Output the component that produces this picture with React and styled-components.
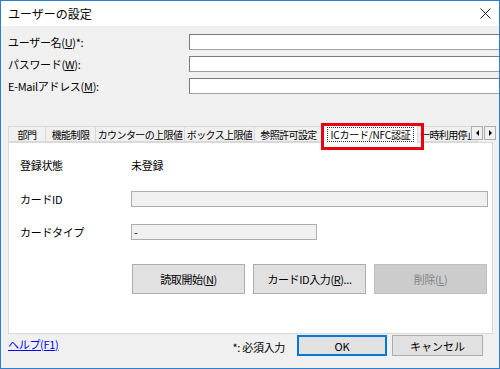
import React from 'react';
import styled, { createGlobalStyle } from 'styled-components';

const GlobalStyle = createGlobalStyle`
  html, body {
    margin: 0;
    padding: 0;
    background: #ffffff;
  }
  * {
    box-sizing: border-box;
  }
`;

const Window = styled.div`
  width: 500px;
  height: 369px;
  border: 1px solid #2b7fd4;
  background: #f0f0f0;
  display: flex;
  flex-direction: column;
  overflow: hidden;
  font-family: 'Noto Sans CJK JP', 'Noto Sans', sans-serif;
  font-size: 11px;
  color: #000;
  position: relative;
`;

const TitleBar = styled.div`
  height: 25px;
  background: #ffffff;
  display: flex;
  align-items: center;
  justify-content: space-between;
  padding: 0 6px 0 7px;
  font-size: 12px;
`;

const CloseButton = styled.div`
  width: 14px;
  height: 14px;
  display: flex;
  align-items: center;
  justify-content: center;
  margin-right: 1px;
`;

const Form = styled.div`
  display: flex;
  flex-direction: column;
  gap: 6px;
  padding: 8px 0 0 7px;
`;

const FieldRow = styled.div`
  display: grid;
  grid-template-columns: 181px 1fr;
  align-items: center;
  height: 16px;
`;

const Label = styled.span`
  white-space: nowrap;
  line-height: 16px;
  letter-spacing: -0.3px;
`;

const Key = styled.span`
  text-decoration: underline;
`;

const TextInput = styled.div`
  height: 16px;
  margin-right: ${p => (p.fit ? '0' : '-2px')};
  background: ${p => (p.disabled ? '#f0f0f0' : '#ffffff')};
  border: 1px solid ${p => (p.disabled ? '#adadad' : '#7a7a7a')};
  border-right-color: ${p => (p.disabled ? '#adadad' : '#a0a0a0')};
  border-bottom-color: ${p => (p.disabled ? '#adadad' : '#a0a0a0')};
  padding-left: 2px;
  line-height: 14px;
  font-size: 11px;
  width: ${p => p.width || 'auto'};
`;

const TabArea = styled.div`
  margin: 31px 6px 0 7px;
  display: flex;
  flex-direction: column;
`;

const TabStrip = styled.div`
  display: flex;
  align-items: flex-end;
  height: 17px;
  position: relative;
`;

const Tab = styled.div`
  height: ${p => (p.active ? '18px' : '16px')};
  margin-bottom: ${p => (p.active ? '-1px' : '0')};
  width: ${p => p.w}px;
  flex-shrink: 0;
  background: ${p => (p.active ? '#ffffff' : '#f0f0f0')};
  border: 1px solid #d9d9d9;
  border-bottom: ${p => (p.active ? 'none' : '1px solid #d9d9d9')};
  border-left: ${p => (p.first || p.active ? '1px solid #d9d9d9' : 'none')};
  display: flex;
  align-items: center;
  justify-content: ${p => (p.cut ? 'flex-start' : 'center')};
  padding-left: ${p => (p.cut ? '2px' : '0')};
  white-space: nowrap;
  overflow: hidden;
  font-size: 10px;
  letter-spacing: -0.6px;
  position: relative;
  z-index: ${p => (p.active ? 2 : 1)};
`;

const FocusText = styled.span`
  border: 1px dotted #333;
  padding: 0 2px;
  line-height: 13px;
  letter-spacing: -0.2px;
`;

const Highlight = styled.div`
  position: absolute;
  left: 313px;
  top: -2px;
  width: 103px;
  height: 27px;
  border: 3px solid #e60012;
  z-index: 5;
  pointer-events: none;
`;

const Scroller = styled.div`
  position: absolute;
  right: -3px;
  top: 1px;
  display: flex;
  gap: 1px;
  z-index: 4;
`;

const ScrollButton = styled.div`
  width: 12px;
  height: 14px;
  background: #f0f0f0;
  border: 1px solid #adadad;
  display: flex;
  align-items: center;
  justify-content: center;
`;

const Arrow = styled.span`
  width: 0;
  height: 0;
  border-top: 3px solid transparent;
  border-bottom: 3px solid transparent;
  border-${p => (p.dir === 'left' ? 'right' : 'left')}: 3px solid #000;
`;

const Panel = styled.div`
  height: 192px;
  background: #ffffff;
  border: 1px solid #d9d9d9;
  padding: 14px 4px 0 11px;
  display: flex;
  flex-direction: column;
`;

const InfoRow = styled.div`
  display: grid;
  grid-template-columns: 111px 1fr;
  align-items: center;
  height: 16px;
  margin-bottom: ${p => p.mb}px;
  letter-spacing: -0.3px;
`;

const ButtonRow = styled.div`
  display: flex;
  gap: 8px;
  padding-left: 112px;
`;

const ActionButton = styled.div`
  width: 113px;
  height: 30px;
  background: ${p => (p.disabled ? '#cccccc' : '#e1e1e1')};
  border: 1px solid ${p => (p.disabled ? '#bfbfbf' : '#adadad')};
  color: ${p => (p.disabled ? '#838383' : '#000')};
  display: flex;
  align-items: center;
  justify-content: center;
  letter-spacing: -0.4px;
`;

const Footer = styled.div`
  display: flex;
  align-items: flex-start;
  height: 33px;
  padding: 1px 0 0 7px;
`;

const HelpLink = styled.span`
  color: #0000ff;
  text-decoration: underline;
  margin-top: 2px;
  line-height: 15px;
  letter-spacing: -0.3px;
`;

const Required = styled.span`
  margin-left: 174px;
  margin-top: 5px;
  line-height: 15px;
  letter-spacing: -0.3px;
`;

const DialogButton = styled.div`
  width: ${p => p.w}px;
  height: 21px;
  margin-left: ${p => p.ml}px;
  background: #e1e1e1;
  border: ${p => (p.primary ? '2px solid #0078d7' : '1px solid #adadad')};
  display: flex;
  align-items: center;
  justify-content: center;
`;

const tabs = [
  { label: '部門', w: 38, first: true },
  { label: '機能制限', w: 50 },
  { label: 'カウンターの上限値', w: 89 },
  { label: 'ボックス上限値', w: 70 },
  { label: '参照許可設定', w: 68 },
  { label: 'ICカード/NFC認証', w: 95, active: true },
  { label: '一時利用停止', w: 60, cut: true },
];

export default function App() {
  return (
    <>
      <GlobalStyle />
      <Window>
        <TitleBar>
          <span>ユーザーの設定</span>
          <CloseButton>
            <svg width="11" height="11" viewBox="0 0 11 11">
              <path d="M0.5 0.5 L10.5 10.5 M10.5 0.5 L0.5 10.5" stroke="#222" strokeWidth="1" />
            </svg>
          </CloseButton>
        </TitleBar>

        <Form>
          <FieldRow>
            <Label>ユーザー名(<Key>U</Key>)*:</Label>
            <TextInput />
          </FieldRow>
          <FieldRow>
            <Label>パスワード(<Key>W</Key>):</Label>
            <TextInput />
          </FieldRow>
          <FieldRow>
            <Label>E-Mailアドレス(<Key>M</Key>):</Label>
            <TextInput />
          </FieldRow>
        </Form>

        <TabArea>
          <TabStrip>
            {tabs.map(t => (
              <Tab key={t.label} w={t.w} first={t.first} active={t.active} cut={t.cut}>
                {t.active ? <FocusText>{t.label}</FocusText> : t.label}
              </Tab>
            ))}
            <Highlight />
            <Scroller>
              <ScrollButton><Arrow dir="left" /></ScrollButton>
              <ScrollButton><Arrow dir="right" /></ScrollButton>
            </Scroller>
          </TabStrip>
          <Panel>
            <InfoRow mb={18}>
              <span>登録状態</span>
              <span>未登録</span>
            </InfoRow>
            <InfoRow mb={17}>
              <span>カードID</span>
              <TextInput disabled fit />
            </InfoRow>
            <InfoRow mb={24}>
              <span>カードタイプ</span>
              <TextInput disabled fit width="186px">-</TextInput>
            </InfoRow>
            <ButtonRow>
              <ActionButton>読取開始(<Key>N</Key>)</ActionButton>
              <ActionButton>カードID入力(<Key>R</Key>)...</ActionButton>
              <ActionButton disabled>削除(<Key>L</Key>)</ActionButton>
            </ButtonRow>
          </Panel>
        </TabArea>

        <Footer>
          <HelpLink>ヘルプ(F1)</HelpLink>
          <Required>*: 必須入力</Required>
          <DialogButton primary w={90} ml={12}>OK</DialogButton>
          <DialogButton w={91} ml={5}>キャンセル</DialogButton>
        </Footer>
      </Window>
    </>
  );
}
